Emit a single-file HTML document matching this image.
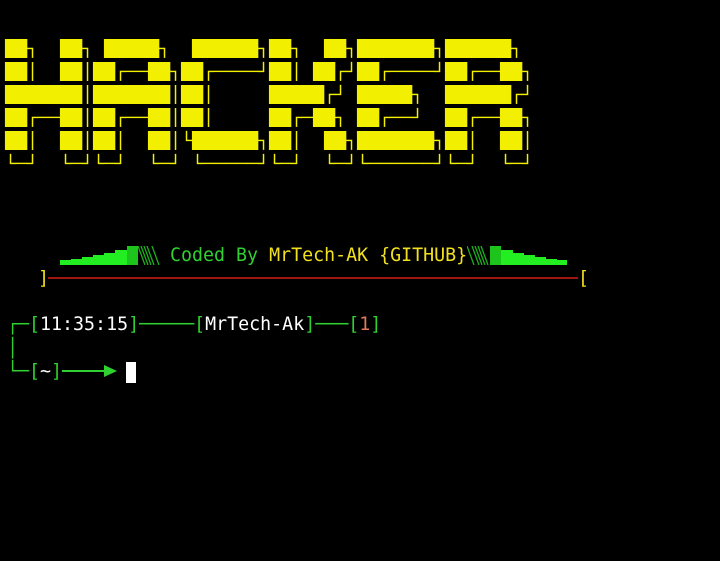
<!DOCTYPE html>
<html><head><meta charset="utf-8"><style>
html,body{margin:0;padding:0;background:#000;width:720px;height:561px;overflow:hidden;position:relative}
pre{margin:0;font-family:"DejaVu Sans Mono","Liberation Mono",monospace;}
#logo{position:absolute;left:5px;top:37px;font-size:16px;line-height:23px;color:#f2f000;transform:scaleX(1.142);transform-origin:0 0}
.t{position:absolute;font-family:"DejaVu Sans Mono","Liberation Mono",monospace;font-size:18.3px;line-height:23px;white-space:pre}
.g{color:#2fd02f}.y{color:#f0e020}.w{color:#fff}.o{color:#e07a5a}
.b{position:absolute;background:#22ee22}
</style></head><body>
<pre id="logo">██┐  ██┐ █████┐  ██████┐██┐  ██┐███████┐██████┐ 
██│  ██│██┌──██┐██┌────┘██│ ██┌┘██┌────┘██┌──██┐
███████│███████│██│     █████┌┘ █████┐  ██████┌┘
██┌──██│██┌──██│██│     ██┌─██┐ ██┌──┘  ██┌──██┐
██│  ██│██│  ██│└██████┐██│  ██┐███████┐██│  ██│
└─┘  └─┘└─┘  └─┘ └─────┘└─┘  └─┘└──────┘└─┘  └─┘</pre>

<div class="b" style="left:60px;top:260px;width:11px;height:5px"></div>
<div class="b" style="left:71px;top:259px;width:11px;height:6px"></div>
<div class="b" style="left:82px;top:257px;width:11px;height:8px"></div>
<div class="b" style="left:93px;top:255px;width:11px;height:10px"></div>
<div class="b" style="left:104px;top:253px;width:11px;height:12px"></div>
<div class="b" style="left:115px;top:250px;width:12px;height:15px"></div>
<div class="b" style="left:127px;top:246px;width:11px;height:19px;background:#1cc41c"></div>
<svg style="position:absolute;left:138px;top:246px" width="24" height="19" stroke="#1cb01c" stroke-width="1.3">
<line x1="0" y1="0" x2="7" y2="19"/><line x1="3" y1="0" x2="10" y2="19"/><line x1="6" y1="0" x2="13" y2="19"/><line x1="9" y1="0" x2="16" y2="19"/><line x1="14" y1="0" x2="21" y2="19"/></svg>

<div class="t" style="left:170px;top:244px"><span class="g">Coded By </span><span class="y">MrTech-AK {GITHUB}</span></div>

<svg style="position:absolute;left:467px;top:246px" width="24" height="19" stroke="#1cb01c" stroke-width="1.3">
<line x1="0" y1="0" x2="7" y2="19"/><line x1="5" y1="0" x2="12" y2="19"/><line x1="8" y1="0" x2="15" y2="19"/><line x1="11" y1="0" x2="18" y2="19"/><line x1="14" y1="0" x2="21" y2="19"/></svg>
<div class="b" style="left:490px;top:246px;width:11px;height:19px;background:#1cc41c"></div>
<div class="b" style="left:501px;top:250px;width:12px;height:15px"></div>
<div class="b" style="left:513px;top:253px;width:11px;height:12px"></div>
<div class="b" style="left:524px;top:255px;width:11px;height:10px"></div>
<div class="b" style="left:535px;top:257px;width:11px;height:8px"></div>
<div class="b" style="left:546px;top:259px;width:11px;height:6px"></div>
<div class="b" style="left:557px;top:260px;width:10px;height:5px"></div>

<div class="t y" style="left:38px;top:267px">]</div>
<div style="position:absolute;left:48px;top:277px;width:530px;height:2px;background:#a01414"></div>
<div class="t y" style="left:578px;top:267px">[</div>

<div class="t" style="left:7px;top:313px"><span class="g">┌─[</span><span class="w">11:35:15</span><span class="g">]─────[</span><span class="w">MrTech-Ak</span><span class="g">]───[</span><span class="o">1</span><span class="g">]</span></div>
<div class="t g" style="left:7px;top:337px">│</div>
<div class="t" style="left:7px;top:360px"><span class="g">└─[</span><span class="w">~</span><span class="g">]</span></div>
<div style="position:absolute;left:62px;top:370px;width:45px;height:2px;background:#2fd02f"></div>
<svg style="position:absolute;left:104px;top:364px" width="14" height="14"><polygon points="0,1 13,7 0,13" fill="#2fd02f"/></svg>
<div style="position:absolute;left:126px;top:362px;width:10px;height:21px;background:#fff"></div>
</body></html>
